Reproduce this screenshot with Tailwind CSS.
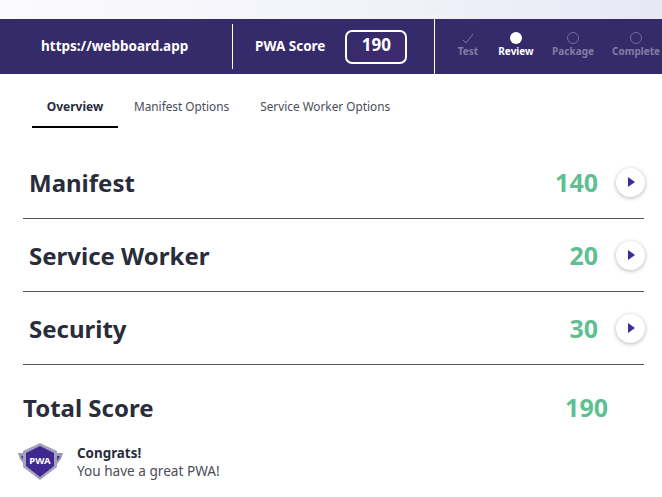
<!DOCTYPE html>
<html>

<head>
  <meta charset="utf-8" />
  <title>PWA Review</title>
  <script src="https://cdn.jsdelivr.net/npm/@tailwindcss/browser@4"></script>
</head>

<body class="bg-white overflow-hidden font-['Noto_Sans',sans-serif]">
  <div class="w-[662px] h-[497px] relative overflow-hidden">
    <div class="h-[19px] bg-gradient-to-r from-[#fbfbfe] via-[#f3f4fa] to-[#e6e9f5]"></div>

    <!-- score bar -->
    <div class="h-[55px] bg-[#352a6a] flex text-white font-bold">
      <div class="w-[232px] shrink-0 flex items-center pl-[41px] text-[13.5px]">https://webboard.app</div>
      <div class="w-px shrink-0 h-[45px] mt-[5px] bg-white"></div>
      <div class="w-[201px] shrink-0 flex items-center pl-[22px] text-[13.5px]">
        PWA Score
        <div class="ml-[20px] w-[62px] h-[34px] shrink-0 rounded-[7px] border-2 border-white bg-gradient-to-br from-[#352a6a] to-[#3f2b70] flex items-center justify-center text-[17px] pb-[5px] leading-none">190</div>
      </div>
      <div class="w-px shrink-0 h-[60px] -mt-[5px] bg-white"></div>
      <div class="flex-1 flex pl-[11px] text-[10px] text-white/40">
        <div class="w-[44px] shrink-0 flex flex-col items-center pt-[13px]">
          <svg class="w-[12px] h-[12px]" viewBox="0 0 12 12" fill="none" stroke="#ffffff" stroke-opacity="0.35"><path d="M1 8l3 3 7-9" /></svg>
          <span>Test</span>
        </div>
        <div class="w-[52px] shrink-0 flex flex-col items-center pt-[13px] text-white">
          <div class="w-[12px] h-[12px] rounded-full bg-white"></div>
          <span>Review</span>
        </div>
        <div class="w-[62px] shrink-0 flex flex-col items-center pt-[13px]">
          <div class="w-[12px] h-[12px] rounded-full border border-white/30"></div>
          <span>Package</span>
        </div>
        <div class="w-[64px] shrink-0 flex flex-col items-center pt-[13px]">
          <div class="w-[12px] h-[12px] rounded-full border border-white/30"></div>
          <span>Complete</span>
        </div>
      </div>
    </div>

    <!-- tabs -->
    <div class="flex h-[54px] pl-[32px] text-[11.8px] text-[#4a4c58]">
      <div class="w-[86px] flex items-start pt-[24px] justify-center font-bold text-[12px] text-[#292c3a] border-b-2 border-black">Overview</div>
      <div class="ml-[16px] pt-[24px]">Manifest Options</div>
      <div class="ml-[31px] pt-[24px]">Service Worker Options</div>
    </div>

    <!-- score rows -->
    <div class="ml-[23px] w-[621px] text-[#292c3a]">
      <div class="h-[91px] border-b border-[#555] flex items-center pl-[6px] pt-[20px]">
        <span class="text-[24px] font-bold">Manifest</span>
        <span class="ml-auto text-[25px] font-bold text-[#5fbf92]">140</span>
        <div class="ml-[18px] -mr-[1px] mb-[2px] w-[29px] h-[29px] rounded-full bg-white shadow-[0_1px_4px_rgba(0,0,0,0.3)] flex items-center justify-center">
          <svg class="w-[8px] h-[10px]" viewBox="0 0 8 10"><path d="M1 0l7 5-7 5z" fill="#41299a" /></svg>
        </div>
      </div>
      <div class="h-[73px] border-b border-[#555] flex items-center pl-[6px] pt-[2px]">
        <span class="text-[24px] font-bold">Service Worker</span>
        <span class="ml-auto text-[25px] font-bold text-[#5fbf92]">20</span>
        <div class="ml-[18px] -mr-[1px] mb-[2px] w-[29px] h-[29px] rounded-full bg-white shadow-[0_1px_4px_rgba(0,0,0,0.3)] flex items-center justify-center">
          <svg class="w-[8px] h-[10px]" viewBox="0 0 8 10"><path d="M1 0l7 5-7 5z" fill="#41299a" /></svg>
        </div>
      </div>
      <div class="h-[73px] border-b border-[#555] flex items-center pl-[6px] pt-[2px]">
        <span class="text-[24px] font-bold">Security</span>
        <span class="ml-auto text-[25px] font-bold text-[#5fbf92]">30</span>
        <div class="ml-[18px] -mr-[1px] mb-[2px] w-[29px] h-[29px] rounded-full bg-white shadow-[0_1px_4px_rgba(0,0,0,0.3)] flex items-center justify-center">
          <svg class="w-[8px] h-[10px]" viewBox="0 0 8 10"><path d="M1 0l7 5-7 5z" fill="#41299a" /></svg>
        </div>
      </div>
      <div class="h-[85px] flex items-center pr-[36px]">
        <span class="text-[24px] font-bold">Total Score</span>
        <span class="ml-auto text-[25px] font-bold text-[#5fbf92]">190</span>
      </div>
    </div>

    <!-- congrats -->
    <div class="flex ml-[17px] -mt-[7px] items-center">
      <svg class="w-[48px] h-[40px]" viewBox="0 0 48 40">
        <path d="M1 10h10l2 12-6-1-4-5z" fill="#9a9ab5" />
        <path d="M46 10h-10l-2 12 6-1 4-5z" fill="#9a9ab5" />
        <path d="M4 13h8l1 6-6-1z" fill="#41299a" />
        <path d="M43 13h-8l-1 6 6-1z" fill="#41299a" />
        <path d="M23 0l17 8v16L23 37 6 24V8z" fill="#a3a3bd" />
        <path d="M23 3l14 7v13L23 34 9 23V10z" fill="#40288f" />
        <text x="23" y="21" text-anchor="middle" font-size="9.5" font-weight="700" fill="#fff" font-family="Noto Sans, sans-serif">PWA</text>
      </svg>
      <div class="ml-[12px] -mt-[2px] text-[13.4px] leading-[18px]">
        <div class="font-bold text-[#292c3a]">Congrats!</div>
        <div class="text-[#4a4c58] text-[13.6px]">You have a great PWA!</div>
      </div>
    </div>
  </div>
</body>

</html>
